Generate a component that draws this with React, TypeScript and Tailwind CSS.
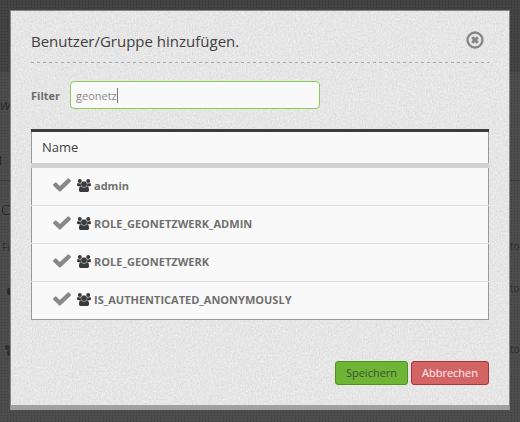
import React from "react";

const groups = ["admin", "ROLE_GEONETZWERK_ADMIN", "ROLE_GEONETZWERK", "IS_AUTHENTICATED_ANONYMOUSLY"];

function CheckIcon() {
  return (
    <svg className="mb-px h-[13.5px] w-[18px] shrink-0" viewBox="121 302 1550 1220" preserveAspectRatio="none" fill="#888">
      <path d="M1671 566q0 40-28 68l-724 724-136 136q-28 28-68 28t-68-28l-136-136-362-362q-28-28-28-68t28-68l136-136q28-28 68-28t68 28l294 295 656-657q28-28 68-28t68 28l136 136q28 28 28 68z" />
    </svg>
  );
}

function UsersIcon() {
  return (
    <svg className="h-[13px] w-[14px] shrink-0" viewBox="0 0 14 13" fill="#3a3a3a">
      <circle cx="2.8" cy="2" r="2" />
      <circle cx="11.2" cy="2" r="2" />
      <path d="M0 6.3C0 5 .3 4 1 4c.6.5 2.200.6 3.200.2-.2 1.400 0 2.200.5 3H1.200C.5 7.200 0 6.900 0 6.300z" />
      <path d="M14 6.300C14 5 13.700 4 13 4c-.6.5-2.200.6-3.200.2.2 1.400 0 2.200-.5 3h3.500c.7 0 1.200-.3 1.200-.900z" />
      <path d="M2 11.200C2 9 2.400 7.300 4 7.300c1 .9 1.900 1.200 3 1.200s2-.3 3-1.200c1.600 0 2 1.700 2 3.900 0 1.200-.7 1.800-1.800 1.800H3.800C2.700 13 2 12.400 2 11.200z" />
      <circle cx="7" cy="5.300" r="3.100" stroke="#f9f9f9" strokeWidth="0.3" />
    </svg>
  );
}

function CloseIcon() {
  return (
    <svg className="size-[18px]" viewBox="0 0 18 18" fill="none" stroke="#858585">
      <circle cx="9" cy="9" r="7.5" strokeWidth="2.3" />
      <path d="M6.200 6.200l5.600 5.600M11.800 6.200l-5.600 5.600" strokeWidth="3" />
    </svg>
  );
}

function PaperTexture() {
  return (
    <svg className="absolute inset-0 h-full w-full" aria-hidden="true">
      <filter id="paper" x="0" y="0" width="100%" height="100%" colorInterpolationFilters="sRGB">
        <feTurbulence type="fractalNoise" baseFrequency="0.7 0.5" numOctaves="2" seed="4" />
        <feColorMatrix values="0.12 0 0 0 0.842  0.12 0 0 0 0.842  0.12 0 0 0 0.842  0 0 0 0 1" />
      </filter>
      <rect width="100%" height="100%" filter="url(#paper)" />
    </svg>
  );
}

function DimmedPage() {
  return (
    <div className="absolute inset-0 flex flex-col text-[10px] leading-4 text-[#2e2e2e]" aria-hidden="true">
      <div className="h-[72px]" />
      <div className="h-[108px] bg-white/5 pt-[22px]">
        <div className="text-[15px] italic leading-5">w</div>
        <div className="mt-[42px] h-[9px] w-px bg-[#292929]" />
      </div>
      <div className="flex flex-1 justify-between border-t border-black/20 bg-white/5">
        <div className="flex flex-col pl-[2px] pt-6">
          <div className="size-[10px] rounded-sm border border-[#292929]" />
          <div className="mt-6">Fi</div>
          <div className="ml-[5px] mt-[33px] h-[7px] w-[5px] rounded-full bg-[#292929]" />
          <div className="ml-[3px] mt-[50px] size-[5px] rounded-full bg-[#303030]" />
          <div className="ml-[5px] h-[6px] w-[5px] rounded-full bg-[#303030]" />
        </div>
        <div className="flex w-[10px] flex-col pt-[57px]">
          <div>to</div>
          <div className="mt-[26px]">to</div>
          <div className="mt-[45px]">to</div>
        </div>
      </div>
    </div>
  );
}

export default function App() {
  return (
    <div className="relative h-[422px] w-[520px] overflow-hidden bg-[#434343] bg-[radial-gradient(#353535_0.8px,transparent_1px)] bg-[length:3px_3px] p-[10px] font-['Open_Sans',sans-serif]">
      <DimmedPage />
      <section className="relative h-[400px] w-[500px] border border-b-[5px] border-[#858585] border-b-[#a0a0a0] px-5">
        <PaperTexture />
        <div className="relative">
          <header className="flex h-[51px] items-start justify-between">
            <h1 className="pt-[19px] text-[15px] leading-[22px] text-[#404040]">Benutzer/Gruppe hinzufügen.</h1>
            <button className="mr-[5px] mt-[20px]" aria-label="Close"><CloseIcon /></button>
          </header>
          <div className="h-px bg-[repeating-linear-gradient(90deg,#aaa_0_3px,transparent_3px_6px)]" />
          <div className="mt-[18px] flex h-[28px] items-center">
            <label className="w-[39px] pt-px text-[11px] font-bold leading-4 text-[#6d6d6d]">Filter</label>
            <div className="flex h-[28px] w-[250px] items-center rounded-[4px] border border-[#88cc55] bg-[#f9f9f9] px-[5px] text-[11px] text-[#888]">
              <span className="pt-[2px]">geonetz</span><span className="h-[15px] w-px bg-[#777]" />
            </div>
          </div>
          <div className="mt-5 h-[191px] border-x border-b border-[#999] bg-[#f9f9f9]">
            <div className="-mx-px h-[3px] bg-[#3d3b3b]" />
            <div className="h-[31px] pl-[10px] text-[13px] leading-[30px] text-[#404040]">Name</div>
            <div className="-mx-px h-[5px] bg-[#d2d2d2]" />
            {groups.map((g, i) => (
              <div key={g} className={`-mx-px flex items-center pb-[2px] pl-[22px] ${i < 3 ? "h-[38px] border-b border-[#ddd]" : "h-[37px]"}`}>
                <CheckIcon />
                <span className="ml-[6px] flex"><UsersIcon /></span>
                <span className="ml-[3px] text-[11px] font-bold leading-4 text-[#707070]">{g}</span>
              </div>
            ))}
          </div>
          <footer className="mt-[41px] flex justify-end gap-[3px] text-[11px]">
            <button className="h-[24px] w-[73px] rounded-[3px] border border-[#4e9320] bg-[#6eb536] text-[#404f35]">Speichern</button>
            <button className="h-[24px] w-[78px] rounded-[3px] border border-[#a93636] bg-[#d46464] text-[#fff3f3]">Abbrechen</button>
          </footer>
        </div>
      </section>
    </div>
  );
}
